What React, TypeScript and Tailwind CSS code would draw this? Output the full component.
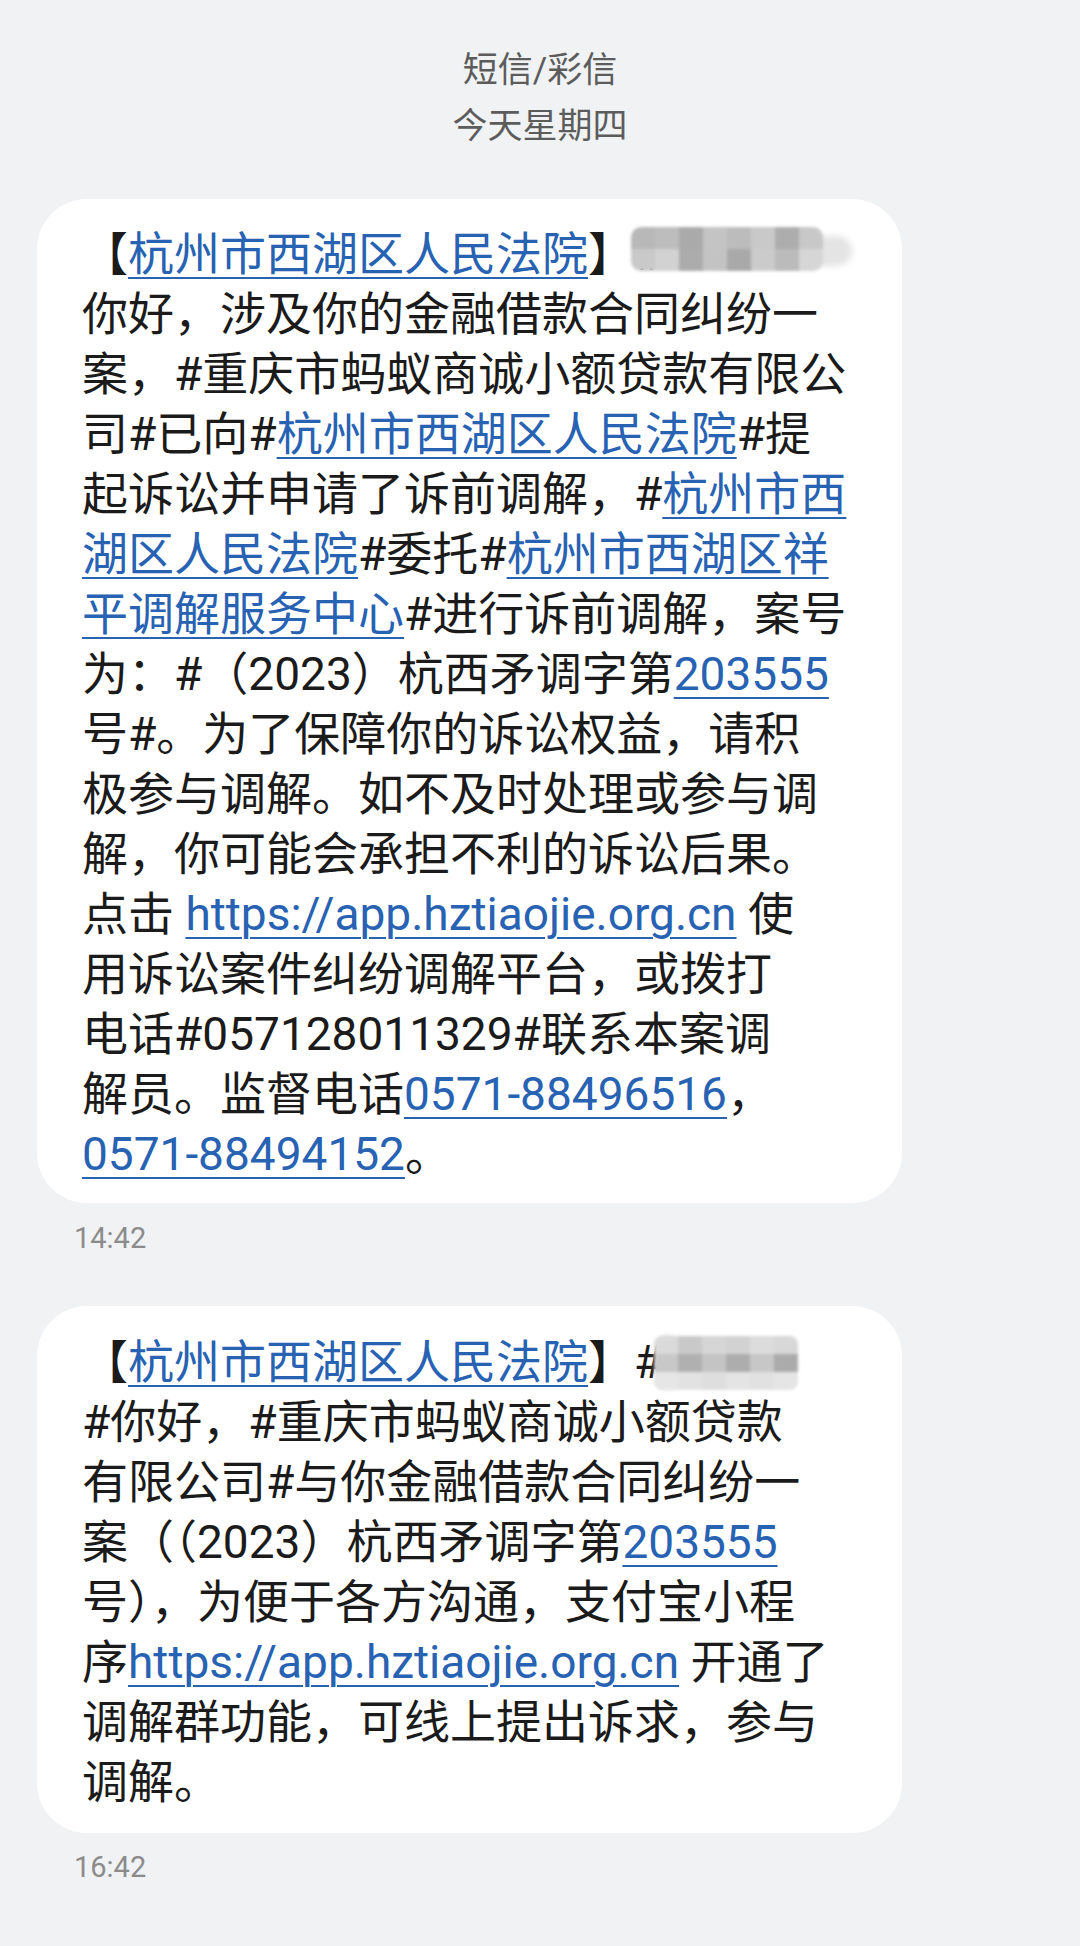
import React from 'react';

interface kids {
  children?: React.ReactNode;
}

const Link: React.FC<kids> = ({ children }) => (
  <span className="text-[#2762b3] underline decoration-2 underline-offset-[7px]">
    {children}
  </span>
);

const Line: React.FC<kids> = ({ children }) => (
  <div className="h-[60px] whitespace-nowrap leading-[60px]">{children}</div>
);

// blurred grey blocks hiding the recipient's name
const Mosaic: React.FC<{ cells: string[][]; box: string; cell: string; glow: string }> = ({
  cells,
  box,
  cell,
  glow,
}) => (
  <span className="relative inline-block h-[60px] w-0 align-top">
    <span className={glow} />
    <span className={box}>
      {cells.map((row, i) => (
        <span key={i} className="flex">
          {row.map((c, j) => (
            <span key={j} className={cell} style={{ backgroundColor: c }} />
          ))}
        </span>
      ))}
    </span>
  </span>
);

const first = [
  ['#b8b8b8', '#bdbdbd', '#aaaaaa', '#c4c4c4', '#bcbcbc', '#c9c9c9', '#adadad', '#c8c8c8'],
  ['#c9c9c9', '#d2d2d2', '#acacac', '#c3c3c3', '#a9a9a9', '#cbcbcb', '#bbbbbb', '#d6d6d6'],
];

const second = [
  ['#dadada', '#c9c9c9', '#d6d6d6', '#d2d2d2', '#dcdcdc', '#d8d8d8'],
  ['#c8c8c8', '#b0b0b0', '#c4c4c4', '#adadad', '#c7c7c7', '#ababab'],
  ['#e6e6e6', '#e2e2e2', '#dedede', '#e4e4e4', '#e1e1e1', '#e5e5e5'],
];

const Bubble: React.FC<kids & { className?: string }> = ({ children, className }) => (
  <div
    className={`ml-[37px] w-[865px] rounded-[50px] bg-white pl-[45px] text-[46px] text-[#1b1b1b] ${className}`}
  >
    {children}
  </div>
);

const Time: React.FC<kids & { className?: string }> = ({ children, className }) => (
  <div className={`ml-[74px] h-[40px] text-[29px] leading-[40px] text-[#8b8b8b] ${className}`}>
    {children}
  </div>
);

export default function App() {
  return (
    <div className="h-[1946px] w-[1080px] overflow-hidden bg-[#f1f2f4] pt-[43px] font-['Roboto','Noto_Sans_CJK_SC',sans-serif]">
      <div className="text-center text-[35px] leading-[56px] text-[#5c5c5c]">
        <div>短信/彩信</div>
        <div>今天星期四</div>
      </div>

      <Bubble className="mt-[44px] pt-[25px] pb-[19px]">
        <Line>
          【<Link>杭州市西湖区人民法院</Link>】#
          <Mosaic
            cells={first}
            box="absolute left-[-31px] top-[3px] flex flex-col overflow-hidden rounded-[10px] blur-[1.5px]"
            cell="block h-[22px] w-[24px]"
            glow="absolute left-[140px] top-[12px] h-[30px] w-[50px] rounded-full bg-[#e4e4e4] blur-[3px]"
          />
        </Line>
        <Line>你好，涉及你的金融借款合同纠纷一</Line>
        <Line>案，#重庆市蚂蚁商诚小额贷款有限公</Line>
        <Line>
          司#已向#<Link>杭州市西湖区人民法院</Link>#提
        </Line>
        <Line>
          起诉讼并申请了诉前调解，#<Link>杭州市西</Link>
        </Line>
        <Line>
          <Link>湖区人民法院</Link>#委托#<Link>杭州市西湖区祥</Link>
        </Line>
        <Line>
          <Link>平调解服务中心</Link>#进行诉前调解，案号
        </Line>
        <Line>
          为：#（2023）杭西矛调字第<Link>203555</Link>
        </Line>
        <Line>号#。为了保障你的诉讼权益，请积</Line>
        <Line>极参与调解。如不及时处理或参与调</Line>
        <Line>解，你可能会承担不利的诉讼后果。</Line>
        <Line>
          点击 <Link>https://app.hztiaojie.org.cn</Link> 使
        </Line>
        <Line>用诉讼案件纠纷调解平台，或拨打</Line>
        <Line>电话#057128011329#联系本案调</Line>
        <Line>
          解员。监督电话<Link>0571-88496516</Link>，
        </Line>
        <Line>
          <Link>0571-88494152</Link>。
        </Line>
      </Bubble>
      <Time className="mt-[15px]">14:42</Time>

      <Bubble className="mt-[48px] pt-[26px] pb-[21px]">
        <Line>
          【<Link>杭州市西湖区人民法院</Link>】#
          <Mosaic
            cells={second}
            box="absolute left-[-8px] top-[4px] flex flex-col overflow-hidden rounded-[8px] blur-[1.5px]"
            cell="block h-[18px] w-[24px]"
            glow="absolute left-[-2px] top-[2px] h-[56px] w-[14px] rounded-full bg-[#ececec] blur-[2px]"
          />
        </Line>
        <Line>#你好，#重庆市蚂蚁商诚小额贷款</Line>
        <Line>有限公司#与你金融借款合同纠纷一</Line>
        <Line>
          案（（2023）杭西矛调字第<Link>203555</Link>
        </Line>
        <Line>号），为便于各方沟通，支付宝小程</Line>
        <Line>
          序<Link>https://app.hztiaojie.org.cn</Link> 开通了
        </Line>
        <Line>调解群功能，可线上提出诉求，参与</Line>
        <Line>调解。</Line>
      </Bubble>
      <Time className="mt-[14px]">16:42</Time>
    </div>
  );
}
